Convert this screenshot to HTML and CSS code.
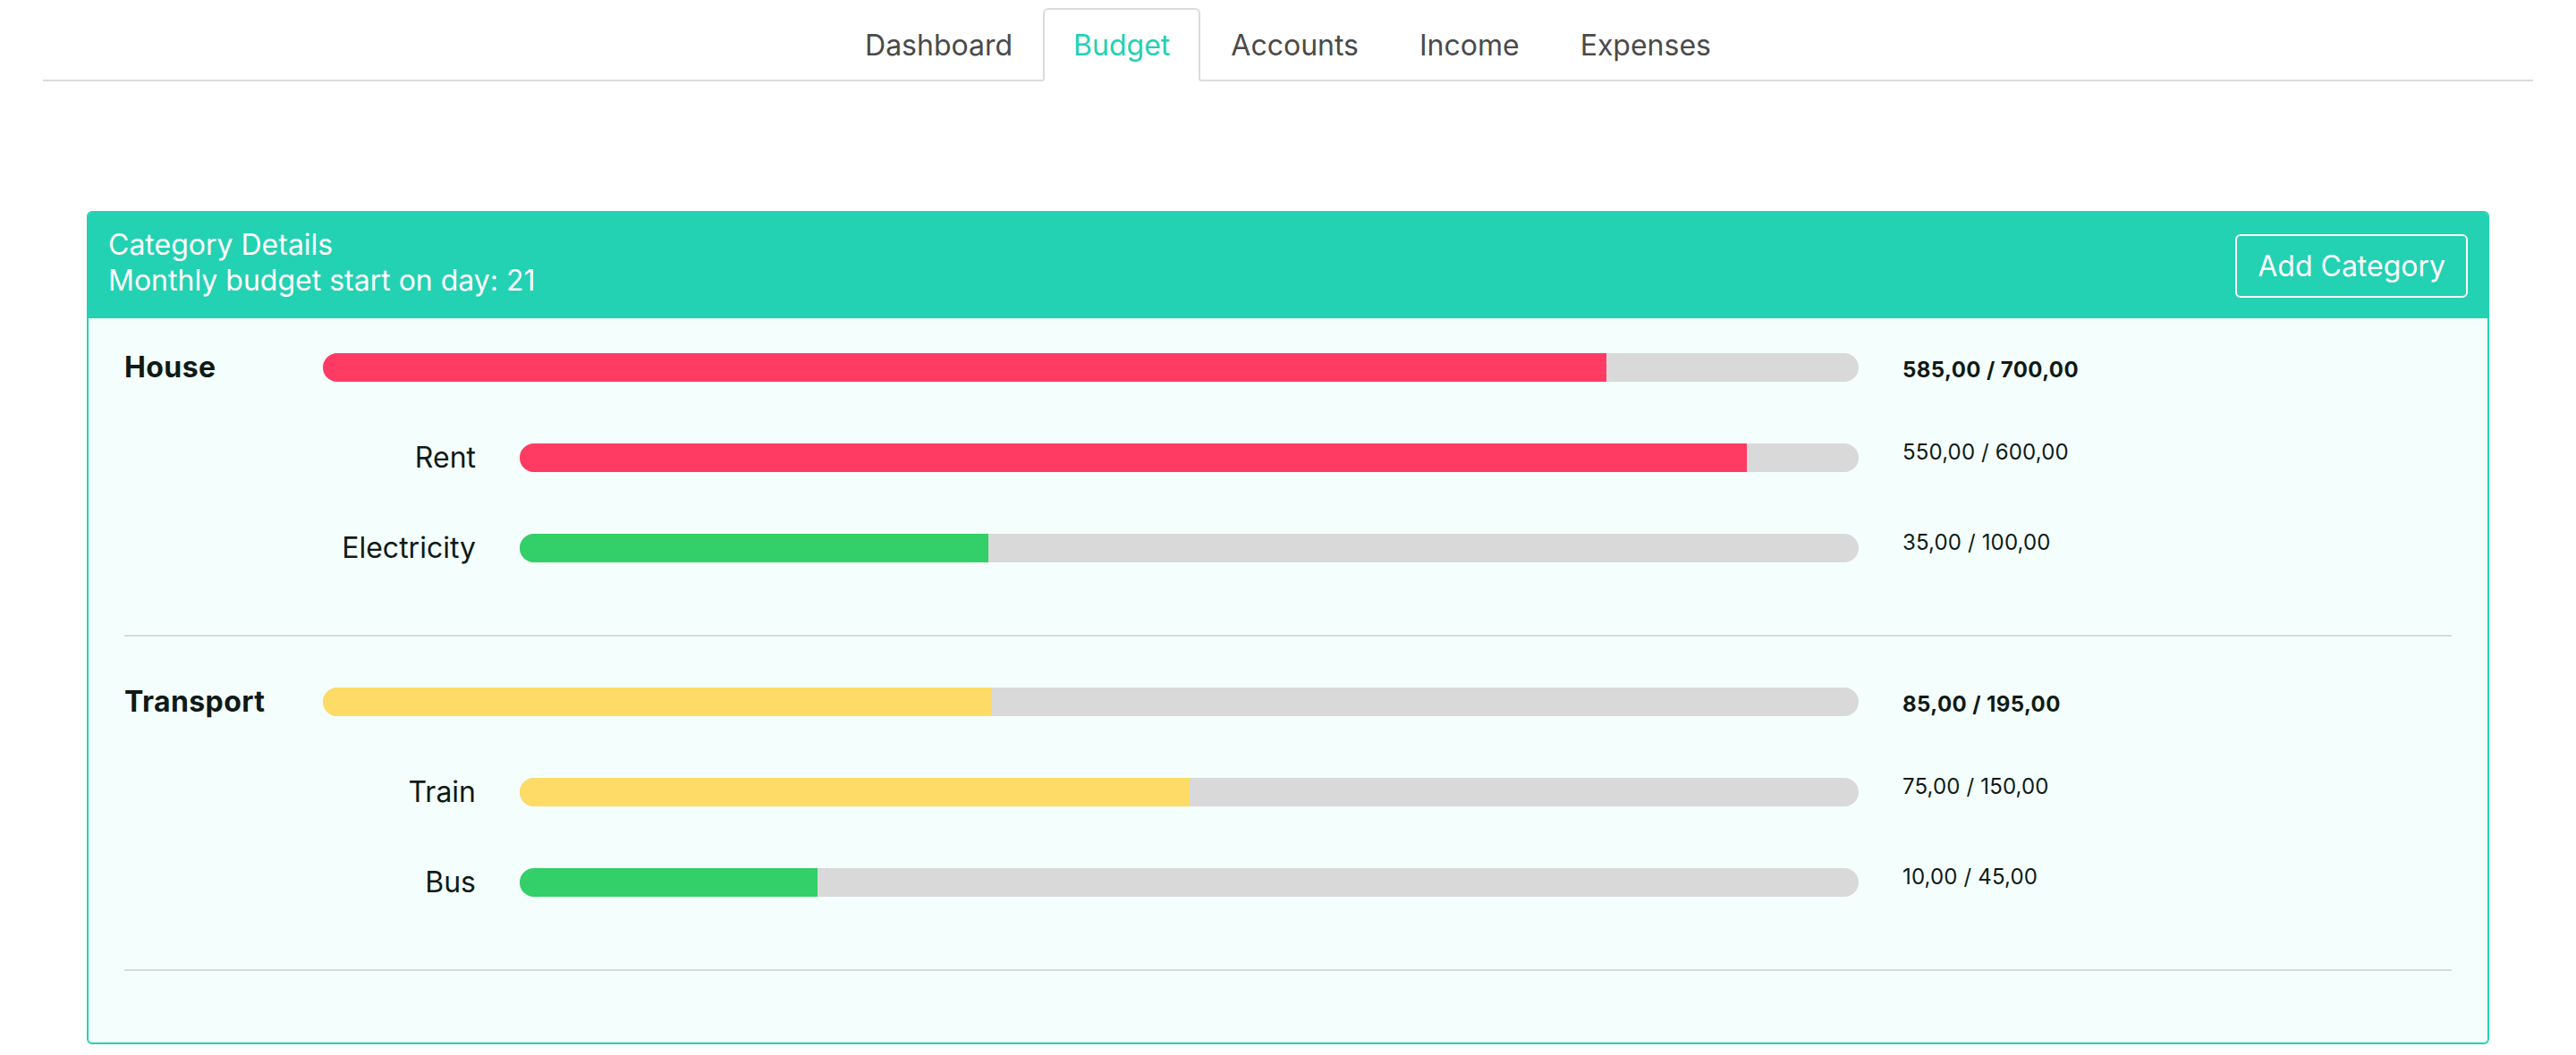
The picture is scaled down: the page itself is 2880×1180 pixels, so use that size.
FILE: index.html
```html
<!DOCTYPE html>
<html lang="en">
<head>
<meta charset="utf-8">
<title>Budget</title>
<link rel="stylesheet" href="styles.css">
</head>
<body>
<nav class="nav">
  <ul class="tabs">
    <li class="tab">Dashboard</li>
    <li class="tab active">Budget</li>
    <li class="tab">Accounts</li>
    <li class="tab">Income</li>
    <li class="tab">Expenses</li>
  </ul>
</nav>
<main class="main">
  <section class="card">
    <header class="card-header">
      <div class="card-title">
        <div>Category Details</div>
        <div>Monthly budget start on day: 21</div>
      </div>
      <button class="btn-outline">Add Category</button>
    </header>
    <div class="card-body">
      <div class="group">
        <div class="row main-row">
          <div class="label">House</div>
          <div class="track"><div class="fill red" style="width:83.57%"></div></div>
          <div class="amount">585,00 / 700,00</div>
        </div>
        <div class="row sub-row">
          <div class="label">Rent</div>
          <div class="track"><div class="fill red" style="width:91.67%"></div></div>
          <div class="amount">550,00 / 600,00</div>
        </div>
        <div class="row sub-row">
          <div class="label">Electricity</div>
          <div class="track"><div class="fill green" style="width:35%"></div></div>
          <div class="amount">35,00 / 100,00</div>
        </div>
      </div>
      <hr class="sep">
      <div class="group">
        <div class="row main-row">
          <div class="label">Transport</div>
          <div class="track"><div class="fill yellow" style="width:43.59%"></div></div>
          <div class="amount">85,00 / 195,00</div>
        </div>
        <div class="row sub-row">
          <div class="label">Train</div>
          <div class="track"><div class="fill yellow" style="width:50%"></div></div>
          <div class="amount">75,00 / 150,00</div>
        </div>
        <div class="row sub-row">
          <div class="label">Bus</div>
          <div class="track"><div class="fill green" style="width:22.22%"></div></div>
          <div class="amount">10,00 / 45,00</div>
        </div>
      </div>
      <hr class="sep">
    </div>
  </section>
</main>
</body>
</html>
```

FILE: styles.css
```css
* { box-sizing: border-box; }
html, body { margin: 0; padding: 0; background: #ffffff; }
body {
  font-family: Inter, "Noto Sans", "Liberation Sans", sans-serif;
  color: #0f1a16;
  font-size: 32px;
  line-height: 1.5;
}
.nav {
  margin: 0 48px;
  padding-top: 9px;
  border-bottom: 2px solid #dcdcdc;
  display: flex;
  justify-content: center;
}
.tabs {
  list-style: none;
  margin: 0 0 -2px 0;
  padding: 0;
  display: flex;
}
.tab {
  padding: 16px 32px 14px;
  border: 2px solid transparent;
  border-top-left-radius: 6px;
  border-top-right-radius: 6px;
  color: #4a4a4a;
  line-height: 48px;
}
.tab.active {
  color: #23d1b3;
  border-color: #dcdcdc #dcdcdc #ffffff;
  background: #ffffff;
}
.main {
  padding: 145px 97px 0;
}
.card {
  border: 2px solid #23d1b3;
  border-radius: 6px;
  background: #f4fffd;
  overflow: hidden;
}
.card-header {
  background: #23d1b3;
  color: #ffffff;
  padding: 0 22px;
  display: flex;
  align-items: center;
  justify-content: space-between;
  margin-top: -2px;
  height: 120px;
}
.card-title {
  line-height: 40px;
  padding-bottom: 4px;
}
.btn-outline {
  font-family: inherit;
  font-size: 32px;
  line-height: 45px;
  color: #ffffff;
  background: transparent;
  border: 2px solid #ffffff;
  border-radius: 6px;
  padding: 11px 23px;
  margin-top: 2px;
}
.card-body {
  padding: 31px 40px 31px;
}
.group {
  display: flex;
  flex-direction: column;
  gap: 53px;
}
.row {
  display: flex;
  align-items: center;
  height: 48px;
}
.label { flex: none; }
.main-row .label {
  width: 222px;
  font-weight: 700;
  letter-spacing: 0.4px;
}
.sub-row .label {
  width: 393px;
  margin-right: 49px;
  text-align: right;
}
.track {
  flex: 1;
  height: 32px;
  border-radius: 16px;
  background: #d9d9d9;
  overflow: hidden;
}
.fill { height: 100%; }
.red { background: #ff3b63; }
.green { background: #33cf68; }
.yellow { background: #fddb66; }
.amount {
  flex: none;
  width: 663px;
  padding-left: 49px;
  font-size: 24px;
  line-height: 36px;
  letter-spacing: 0.15px;
}
.main-row .amount {
  font-weight: 700;
  padding-top: 6px;
  letter-spacing: 0.4px;
}
.sub-row .amount {
  align-self: flex-start;
}
.sep {
  border: 0;
  height: 2px;
  background: #d6dadc;
  margin: 73px 0 49px;
}
```
